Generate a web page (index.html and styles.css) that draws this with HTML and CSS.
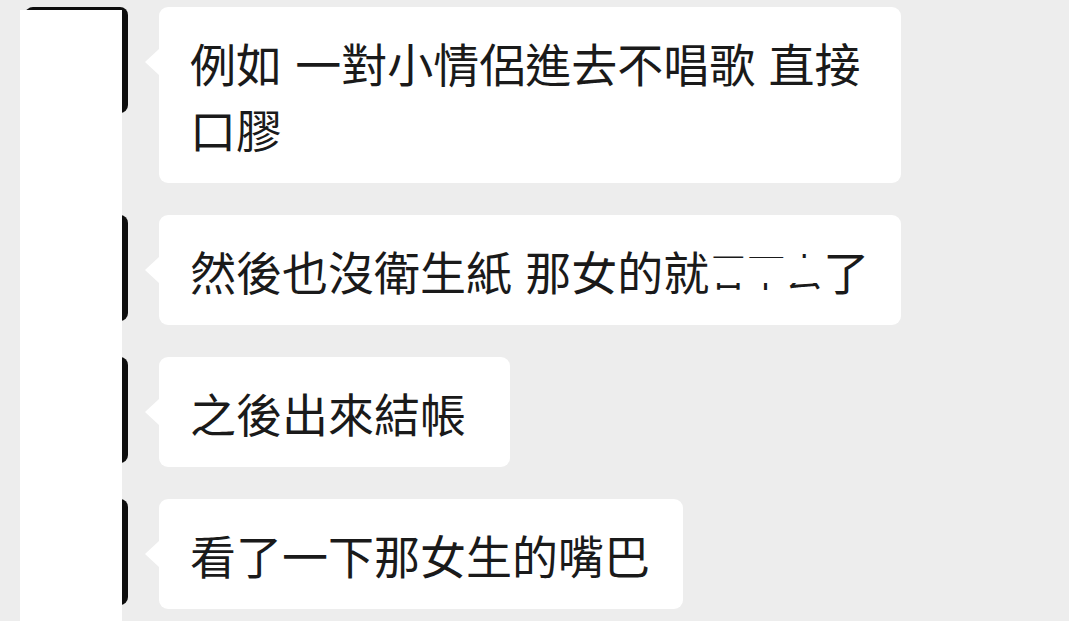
FILE: index.html
```html
<!DOCTYPE html>
<html lang="zh-Hant">
<head>
    <meta charset="UTF-8">
    <meta name="viewport" content="width=device-width, initial-scale=1.0">
    <title>聊天紀錄</title>
    <link rel="stylesheet" href="styles.css">
</head>
<body>
    <div class="chat">
        <div class="msg">
            <div class="avatar"></div>
            <div class="bubble">例如 一對小情侶進去不唱歌 直接口膠</div>
        </div>
        <div class="msg">
            <div class="avatar"></div>
            <div class="bubble bubble-full">然後也沒衛生紙 那女的就<span class="censored">吞下去</span>了</div>
        </div>
        <div class="msg">
            <div class="avatar"></div>
            <div class="bubble bubble-wide">之後出來結帳</div>
        </div>
        <div class="msg">
            <div class="avatar"></div>
            <div class="bubble">看了一下那女生的嘴巴</div>
        </div>
    </div>

    <!-- 頭像遮擋 -->
    <div class="cover"></div>
</body>
</html>
```

FILE: styles.css
```css
body {
    margin: 0;
    padding: 0;
    background-color: #ededed;
    font-family: "Noto Sans CJK TC", "Noto Sans", sans-serif;
    height: 100vh;
    overflow: hidden;
    position: relative;
}

.chat {
    display: flex;
    flex-direction: column;
    gap: 32px;
    padding: 7px 0 0 25px;
}

.msg {
    display: flex;
    align-items: flex-start;
    gap: 31px;
}

.avatar {
    width: 103px;
    height: 106px;
    flex-shrink: 0;
    background-color: #0e0e0e;
    border-radius: 8px;
}

.bubble {
    position: relative;
    box-sizing: border-box;
    max-width: 742px;
    background-color: #fff;
    border-radius: 9px;
    padding: 22px 33px 22px 31px;
    font-size: 46px;
    line-height: 66px;
    word-spacing: 3px;
    color: #1a1a1a;
}

.bubble::before {
    content: "";
    position: absolute;
    left: -14px;
    top: 42px;
    border-top: 13px solid transparent;
    border-bottom: 13px solid transparent;
    border-right: 14px solid #fff;
}

.bubble-full {
    width: 742px;
    padding-right: 28px;
}

.bubble-wide {
    padding-right: 44px;
}

.censored {
    position: relative;
    font-size: 38px;
    vertical-align: 4px;
}

.censored::after {
    content: "";
    position: absolute;
    left: 0;
    right: 0;
    top: 16px;
    bottom: 14px;
    background-color: #fff;
}

.cover {
    position: absolute;
    left: 20px;
    top: 10px;
    width: 102px;
    bottom: 0;
    background-color: #fff;
}
```
